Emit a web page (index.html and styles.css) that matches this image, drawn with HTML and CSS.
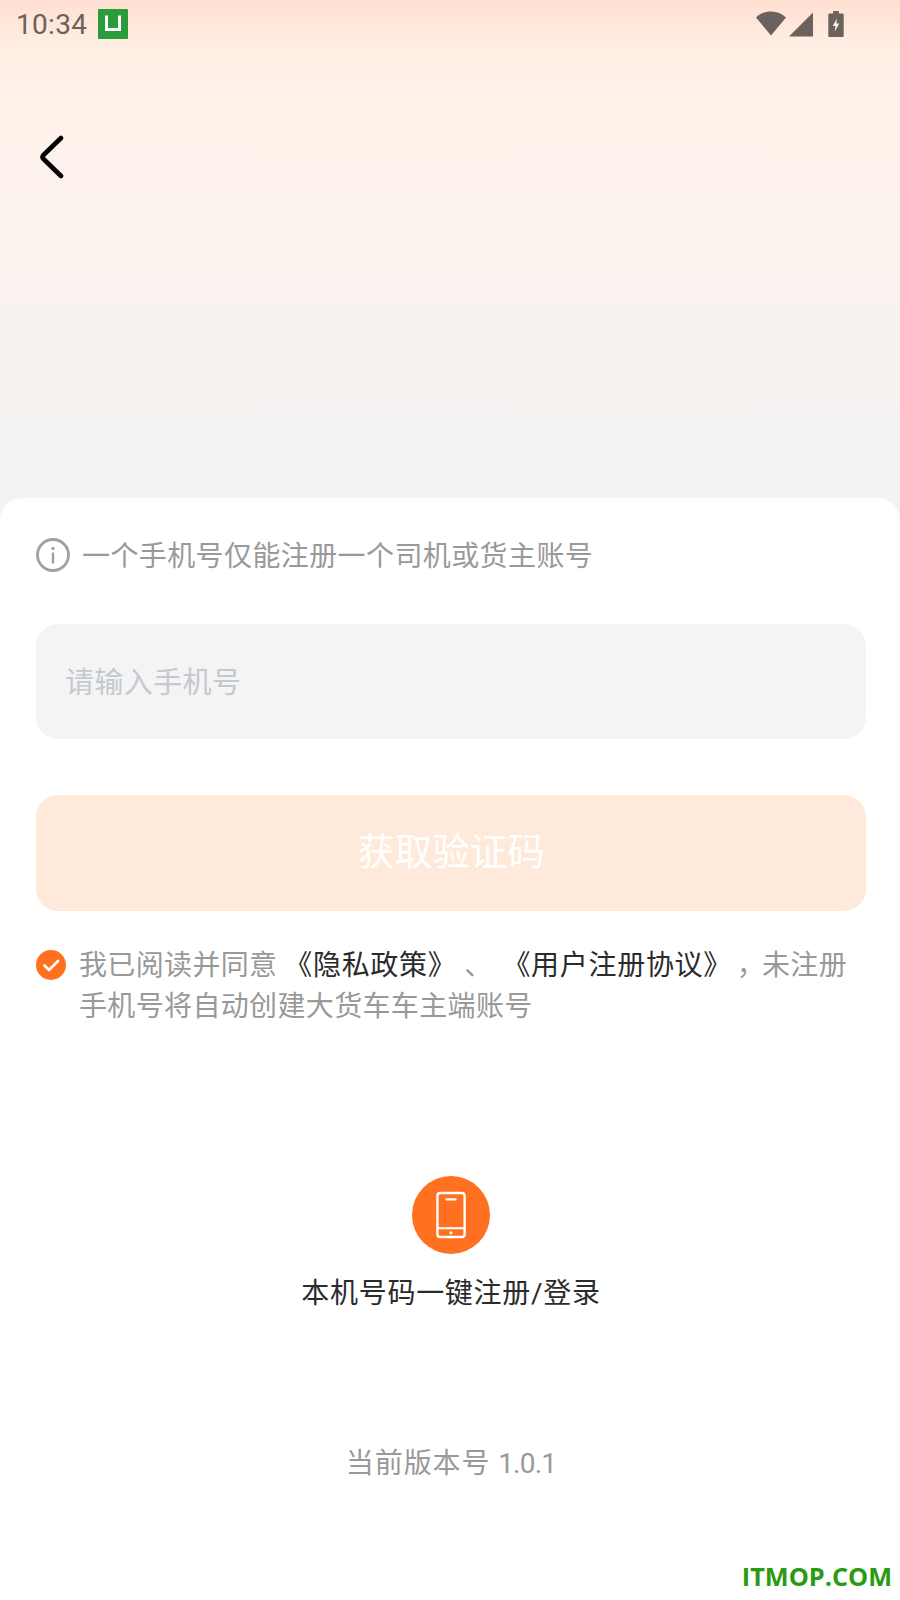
FILE: index.html
```html
<!DOCTYPE html>
<html lang="zh">
<head>
<meta charset="utf-8">
<title>注册</title>
<link rel="stylesheet" href="styles.css">
</head>
<body>
<div class="page">
  <header class="top">
    <div class="status">
      <div class="status-left">
        <span class="time">10:34</span>
        <span class="app-badge"><svg width="30" height="30" viewBox="0 0 30 30"><rect width="30" height="30" rx="1" fill="#2a9c3b"/><path d="M7 6.5V22H23V6.5H20V19H10V6.5Z" fill="#fff"/></svg></span>
      </div>
      <div class="status-right">
        <svg class="wifi" width="30" height="26" viewBox="0 0 30 26"><path d="M0 7.5C4 3.5 9 1.5 15 1.5S26 3.500 30 7.500L15 25.500Z" fill="#6b625d"/></svg>
        <svg class="signal" width="26" height="26" viewBox="0 0 26 26"><path d="M1 25.500L25 1.500V25.500Z" fill="#6b625d"/></svg>
        <svg class="battery" width="16" height="26" viewBox="0 0 16 27"><path d="M5 0H11V2.500H15A1 1 0 0 1 16 3.500V26A1 1 0 0 1 15 27H1A1 1 0 0 1 0 26V3.500A1 1 0 0 1 1 2.500H5Z" fill="#6b625d"/><path d="M9 8L4.500 15.500H7.500L6.500 21.500L11.500 13H8.500Z" fill="#fff3ea"/></svg>
      </div>
    </div>
    <button class="back" aria-label="返回"><svg width="28" height="44" viewBox="0 0 28 44"><path d="M23 3L5 20.500Q4 22 5 23.500L23 41" fill="none" stroke="#000" stroke-width="4.600" stroke-linecap="round" stroke-linejoin="round"/></svg></button>
  </header>
  <main class="card">
    <div class="notice">
      <svg width="34" height="34" viewBox="0 0 34 34"><circle cx="17" cy="17" r="15.500" fill="none" stroke="#a0a0a0" stroke-width="2.800"/><circle cx="17" cy="10.500" r="1.700" fill="#a0a0a0"/><rect x="15.800" y="14.500" width="2.400" height="11" fill="#a0a0a0"/></svg>
      <span class="notice-text">一个手机号仅能注册一个司机或货主账号</span>
    </div>
    <div class="phone-input"><span class="placeholder">请输入手机号</span></div>
    <button class="submit">获取验证码</button>
    <div class="agree">
      <svg class="check" width="30" height="30" viewBox="0 0 30 30"><circle cx="15" cy="15" r="15" fill="#ff7120"/><path d="M8.500 15.500L13 20L22 11" fill="none" stroke="#fff" stroke-width="2.600" stroke-linecap="round" stroke-linejoin="round"/></svg>
      <p class="agree-text">我已阅读并同意 <span class="link link-first">《隐私政策》</span> 、 <span class="link link-second">《用户注册协议》</span> <span class="comma">，</span> 未注册手机号将自动创建大货车车主端账号</p>
    </div>
    <div class="oneclick">
      <span class="phone-circle"><svg width="30" height="48" viewBox="0 0 32 50"><rect x="1.500" y="1.500" width="29" height="47" rx="3" fill="none" stroke="#fff" stroke-width="2.500"/><rect x="10" y="7" width="12" height="2.600" rx="1" fill="#fff"/><rect x="1.500" y="38" width="29" height="2.200" fill="#fff"/><circle cx="16" cy="44" r="1.700" fill="#fff"/></svg></span>
      <span class="oneclick-label">本机号码一键注册/登录</span>
    </div>
    <div class="version">当前版本号 <span class="version-num">1.0.1</span></div>
  </main>
  <div class="watermark">ITMOP.COM</div>
</div>
</body>
</html>
```
FILE: styles.css
```css
* { box-sizing: border-box; }
html, body { margin: 0; padding: 0; }
body {
  width: 900px;
  height: 1600px;
  overflow: hidden;
  font-family: Roboto, "Noto Sans CJK SC", sans-serif;
  background: #fff;
}
.page {
  position: relative;
  width: 900px;
  height: 1600px;
  display: flex;
  flex-direction: column;
  background: linear-gradient(180deg, #ffdfd0 0, #ffefe5 50px, #fff2ea 110px, #f3f3f3 480px);
}
.top { height: 498px; flex: none; }
.status {
  height: 50px;
  display: flex;
  justify-content: space-between;
  align-items: center;
  padding: 0 56px 2px 16px;
}
.status-left { display: flex; align-items: center; gap: 11px; }
.time {
  font-family: Roboto, sans-serif;
  font-size: 28px;
  color: #6b625d;
  letter-spacing: 0.3px;
}
.app-badge, .status-right { display: flex; align-items: center; }
.status-right { gap: 2px; }
.wifi { margin-bottom: 3px; }
.battery { margin-left: 12px; }
.back {
  display: block;
  margin: 85px 0 0 38px;
  padding: 0;
  border: 0;
  background: none;
  line-height: 0;
}
.card {
  flex: 1;
  background: #fff;
  border-radius: 22px 22px 0 0;
  padding: 40px 34px 0 36px;
  display: flex;
  flex-direction: column;
}
.notice {
  display: flex;
  align-items: center;
  gap: 12px;
  height: 34px;
  color: #999;
  font-size: 28px;
  letter-spacing: 0.4px;
}
.notice-text { padding-bottom: 2px; }
.phone-input {
  margin-top: 52px;
  height: 115px;
  padding-left: 29px;
  display: flex;
  align-items: center;
  background: #f4f4f5;
  border-radius: 22px;
  color: #c4c8d0;
  font-size: 29px;
  letter-spacing: 0.4px;
}
.placeholder { padding-bottom: 4px; }
.submit {
  display: block;
  width: 100%;
  margin-top: 56px;
  height: 116px;
  padding: 0 0 10px;
  border: 0;
  border-radius: 22px;
  background: #ffe9db;
  color: #fff;
  font: inherit;
  font-size: 37.500px;
}
.agree {
  margin-top: 39px;
  display: flex;
  align-items: flex-start;
  gap: 13px;
}
.check { flex: none; }
.agree-text {
  margin: -5px 0 0;
  color: #999;
  font-size: 28px;
  line-height: 41px;
  letter-spacing: 0.35px;
  word-spacing: -2.500px;
}
.link { color: #2b2b2b; letter-spacing: 0.7px; }
.link-first { margin: 0 3px 0 2px; }
.link-second { margin-left: 5px; }
.comma { margin-right: -8px; }
.oneclick {
  margin-top: 149px;
  display: flex;
  flex-direction: column;
  align-items: center;
  gap: 20px;
}
.phone-circle {
  width: 78px;
  height: 78px;
  border-radius: 50%;
  background: #ff7120;
  display: flex;
  align-items: center;
  justify-content: center;
}
.oneclick-label { color: #2b2b2b; font-size: 28px; line-height: 40px; letter-spacing: 0.7px; }
.version {
  margin-top: 130px;
  text-align: center;
  color: #999;
  font-size: 28px;
  line-height: 40px;
  letter-spacing: 0.9px;
}
.version-num { letter-spacing: -0.8px; }
.watermark {
  position: absolute;
  right: 8px;
  bottom: 8px;
  font-family: "Open Sans", sans-serif;
  font-weight: 700;
  font-size: 25.300px;
  line-height: 32px;
  color: #2a9a12;
}
```
